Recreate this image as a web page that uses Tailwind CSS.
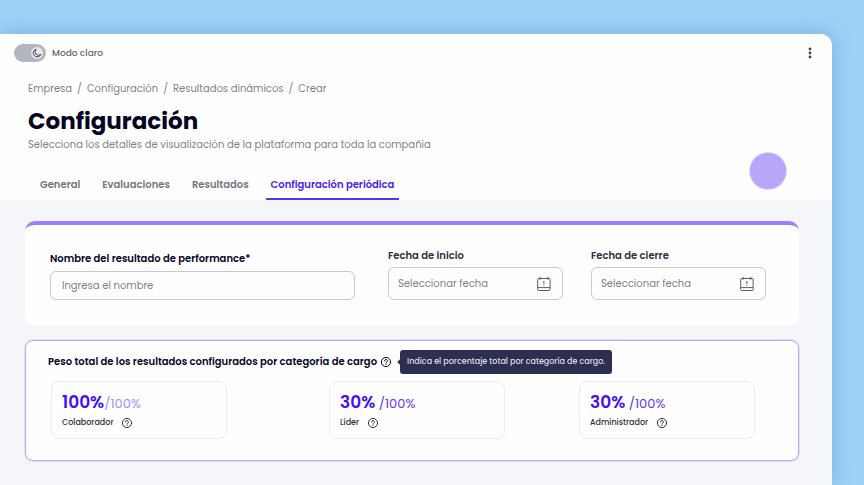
<!DOCTYPE html>
<html lang="es">
<head>
  <meta charset="UTF-8">
  <meta name="viewport" content="width=device-width, initial-scale=1.0">
  <title>Configuración periódica</title>
  <script src="https://cdn.jsdelivr.net/npm/@tailwindcss/browser@4"></script>
</head>
<body class="bg-[#9dd2f8] pt-[34px] pr-8 font-['Poppins','Inter',sans-serif] text-[#05051f]">

  <!-- Iconos compartidos -->
  <svg class="hidden">
    <symbol id="ayuda" viewBox="0 0 12 12" fill="none" stroke="currentColor" stroke-linecap="round" stroke-linejoin="round">
      <circle cx="6" cy="6" r="4.6" />
      <path d="M4.6 4.9a1.4 1.4 0 1 1 2.1 1.2c-.5.3-.7.5-.7 1M6 8.4v.1" />
    </symbol>
    <symbol id="calendario" viewBox="0 0 16 16" fill="none" stroke="currentColor">
      <rect x="1.7" y="2.5" width="12.4" height="12" rx="1" />
      <path d="M1.7 11.6h12.4M4 .8v3M11.8 .8v3M7.9 5v3M7.9 8.8v1" />
    </symbol>
  </svg>

  <main class="relative min-h-[calc(100vh-34px)] overflow-hidden rounded-tr-xl bg-[#f5f6fa] shadow-[0_0_20px_rgba(50,110,170,0.35)]">
    <header class="bg-[#fefefe] pt-[10px]">
      <div class="flex items-center justify-between pr-4 pl-[14px]">
        <label class="flex items-center gap-[6px] text-[9px] leading-[18px] font-medium text-[#66666f]">
          <span class="relative flex h-[18px] w-8 items-center justify-end rounded-full bg-[#b3b6bf] pr-[3px]">
            <input type="checkbox" role="switch" class="absolute inset-0 appearance-none rounded-full" checked>
            <span class="flex size-3 items-center justify-center rounded-full bg-[#e6e7eb] text-[#4b4c57]">
              <svg class="size-[10px]" viewBox="0 0 10 10" fill="none" stroke="currentColor" stroke-linejoin="round">
                <path d="M4.2 1.2a3.9 3.9 0 1 0 4.7 5.1 3.3 3.3 0 0 1-4.7-5.1z" />
              </svg>
            </span>
          </span>
          Modo claro
        </label>
        <button type="button" aria-label="Más opciones" class="flex w-3 justify-center text-[#44444f]">
          <svg class="h-3 w-1" viewBox="0 0 4 12" fill="currentColor">
            <circle cx="2" cy="2" r="1.4" />
            <circle cx="2" cy="6" r="1.4" />
            <circle cx="2" cy="10" r="1.4" />
          </svg>
        </button>
      </div>

      <div class="mt-[19px] pl-7">
        <nav aria-label="Ruta" class="flex gap-[5px] text-[10px] leading-4 text-[#82828a]">
          <a href="#">Empresa</a>
          <span>/</span>
          <a href="#">Configuración</a>
          <span>/</span>
          <a href="#">Resultados dinámicos</a>
          <span>/</span>
          <a href="#">Crear</a>
        </nav>
        <h1 class="mt-2 text-[23px] leading-8 font-bold">Configuración</h1>
        <p class="text-[10px] leading-4 text-[#82828a]">Selecciona los detalles de visualización de la plataforma para toda la compañia</p>
      </div>

      <nav aria-label="Secciones" class="mt-4 flex gap-[22px] pl-10 text-[10px] leading-[31px] font-semibold text-[#77777f]">
        <a href="#">General</a>
        <a href="#">Evaluaciones</a>
        <a href="#">Resultados</a>
        <a href="#" aria-current="page" class="-ml-[5px] px-[5px] text-[#4a1df0] shadow-[inset_0_-2px_#5a35e8]">Configuración periódica</a>
      </nav>
    </header>

    <div class="flex flex-col gap-[14px] pt-[21px] pr-[33px] pb-6 pl-[25px]">
      <form class="flex items-end rounded-[10px] border-t-4 border-[#9b80fa] bg-[#fefefe] pt-[23px] pr-[33px] pb-[26px] pl-[25px]">
        <div class="flex flex-1 flex-col gap-1">
          <label for="nombre" class="text-[10px] leading-4 font-semibold">Nombre del resultado de performance*</label>
          <input id="nombre" type="text" placeholder="Ingresa el nombre" class="h-[29px] w-full rounded-md border border-[#c9c9d0] bg-transparent px-[11px] text-[10px] placeholder:text-[#82828a]">
        </div>
        <div class="ml-[33px] flex w-[175px] flex-col gap-[3px]">
          <label for="inicio" class="text-[10px] leading-4 font-semibold text-[#30303f]">Fecha de inicio</label>
          <div class="flex h-[33px] items-center rounded-md border border-[#c9c9d0] pr-[10px] pl-[9px]">
            <input id="inicio" type="text" placeholder="Seleccionar fecha" class="min-w-0 flex-1 bg-transparent text-[10px] placeholder:text-[#82828a]">
            <button type="button" aria-label="Abrir calendario" class="text-[#5c5c68]"><svg class="size-4"><use href="#calendario" /></svg></button>
          </div>
        </div>
        <div class="ml-7 flex w-[175px] flex-col gap-[3px]">
          <label for="cierre" class="text-[10px] leading-4 font-semibold text-[#30303f]">Fecha de cierre</label>
          <div class="flex h-[33px] items-center rounded-md border border-[#c9c9d0] pr-[10px] pl-[9px]">
            <input id="cierre" type="text" placeholder="Seleccionar fecha" class="min-w-0 flex-1 bg-transparent text-[10px] placeholder:text-[#82828a]">
            <button type="button" aria-label="Abrir calendario" class="text-[#5c5c68]"><svg class="size-4"><use href="#calendario" /></svg></button>
          </div>
        </div>
      </form>

      <section class="rounded-lg border border-[#bba9fb] bg-[#fefefe] px-[22px] pt-[9px] pb-[21px] ring-1 ring-[#bba9fb]/30">
        <div class="flex items-center">
          <h2 class="text-[10px] leading-6 font-semibold">Peso total de los resultados configurados por categoría de cargo</h2>
          <button type="button" aria-label="Ayuda" class="ml-[3px]"><svg class="size-3"><use href="#ayuda" /></svg></button>
          <div role="tooltip" class="relative ml-2 rounded-[3px] bg-[#2e2e50] px-[7px] text-[8px] leading-6 font-medium text-[#dcdce6]">
            <span class="absolute top-[10px] -left-[2px] size-1 rotate-45 bg-[#2e2e50]"></span>
            Indica el porcentaje total por categoría de cargo.
          </div>
        </div>

        <div class="mt-[7px] ml-[3px] grid grid-cols-[278fr_250fr_197fr]">
          <div class="h-[58px] w-44 rounded-lg border border-[#ececf1] px-[10px] pt-[9px]">
            <p class="text-[13px] leading-[22px] text-[#a68ffb]"><strong class="text-[17px] leading-[22px] font-semibold text-[#4310f5]">100%</strong>/100%</p>
            <p class="flex items-center gap-2 text-[8px] leading-4 font-medium text-[#30303f]">Colaborador
              <button type="button" aria-label="Ayuda"><svg class="size-3"><use href="#ayuda" /></svg></button>
            </p>
          </div>
          <div class="h-[58px] w-44 rounded-lg border border-[#ececf1] px-[10px] pt-[9px]">
            <p class="text-[13px] leading-[22px] text-[#6238f5]"><strong class="text-[17px] leading-[22px] font-semibold text-[#4310f5]">30%</strong> /100%</p>
            <p class="flex items-center gap-2 text-[8px] leading-4 font-medium text-[#30303f]">Líder
              <button type="button" aria-label="Ayuda"><svg class="size-3"><use href="#ayuda" /></svg></button>
            </p>
          </div>
          <div class="h-[58px] w-44 rounded-lg border border-[#ececf1] px-[10px] pt-[9px]">
            <p class="text-[13px] leading-[22px] text-[#6238f5]"><strong class="text-[17px] leading-[22px] font-semibold text-[#4310f5]">30%</strong> /100%</p>
            <p class="flex items-center gap-2 text-[8px] leading-4 font-medium text-[#30303f]">Administrador
              <button type="button" aria-label="Ayuda"><svg class="size-3"><use href="#ayuda" /></svg></button>
            </p>
          </div>
        </div>
      </section>
    </div>

    <!-- Puntero -->
    <div class="absolute top-[119px] right-[46px] size-9 rounded-full bg-[#b7a6f9] ring-1 ring-[#ddd5fb]"></div>
  </main>

</body>
</html>
